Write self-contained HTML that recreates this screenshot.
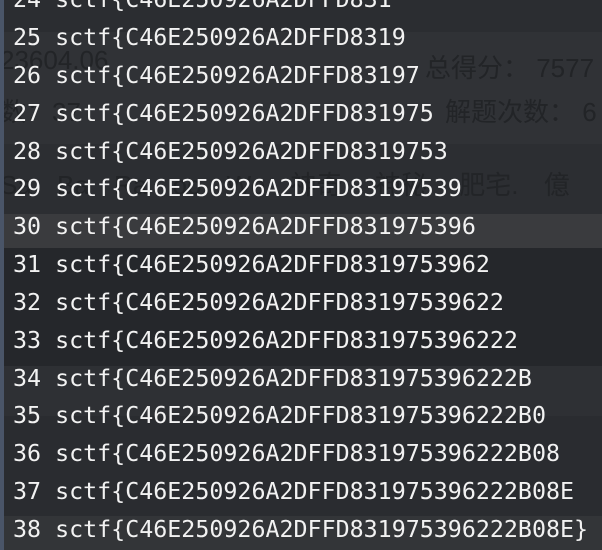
<!DOCTYPE html>
<html><head><meta charset="utf-8"><style>
html,body{margin:0;padding:0;width:602px;height:550px;overflow:hidden;background:#2a2c30;}
.bg{position:absolute;left:0;width:602px;}
.ghost{position:absolute;font-family:"Liberation Sans","Noto Sans CJK SC",sans-serif;color:#222427;font-size:26px;}
.strip{position:absolute;left:0;top:0;width:4px;height:550px;background:#4a5568;}
.code{position:absolute;left:13px;top:-18.8px;font-family:"DejaVu Sans Mono","Liberation Mono",monospace;font-size:23.3px;line-height:37.85px;color:#f2f2f2;white-space:pre;}
</style></head><body>
<div class="bg" style="top:0;height:32px;background:#2b2d31"></div>
<div class="bg" style="top:32px;height:112px;background:#303236"></div>
<div class="bg" style="top:144px;height:70px;background:#2c2e32"></div>
<div class="bg" style="top:214px;height:34px;background:#3a3b3e"></div>
<div class="bg" style="top:248px;height:118px;background:#25272b"></div>
<div class="bg" style="top:366px;height:50px;background:#2e3034"></div>
<div class="bg" style="top:416px;height:100px;background:#2a2c30"></div>
<div class="bg" style="top:516px;height:34px;background:#333538"></div>
<div class="ghost" style="left:0;top:45px">23604.06</div>
<div class="ghost" style="left:425px;top:48px">总得分：&nbsp;7577</div>
<div class="ghost" style="left:0;top:92px">数：37</div>
<div class="ghost" style="left:445px;top:92px">解题次数：&nbsp;6</div>
<div class="ghost" style="left:0;top:165px;word-spacing:18px">Sa Ba Ra oo Wo 神奇. 神秘. 肥宅. 億</div>
<div class="strip"></div>
<div class="code">24 sctf{C46E250926A2DFFD831
25 sctf{C46E250926A2DFFD8319
26 sctf{C46E250926A2DFFD83197
27 sctf{C46E250926A2DFFD831975
28 sctf{C46E250926A2DFFD8319753
29 sctf{C46E250926A2DFFD83197539
30 sctf{C46E250926A2DFFD831975396
31 sctf{C46E250926A2DFFD8319753962
32 sctf{C46E250926A2DFFD83197539622
33 sctf{C46E250926A2DFFD831975396222
34 sctf{C46E250926A2DFFD831975396222B
35 sctf{C46E250926A2DFFD831975396222B0
36 sctf{C46E250926A2DFFD831975396222B08
37 sctf{C46E250926A2DFFD831975396222B08E
38 sctf{C46E250926A2DFFD831975396222B08E}</div>
</body></html>
